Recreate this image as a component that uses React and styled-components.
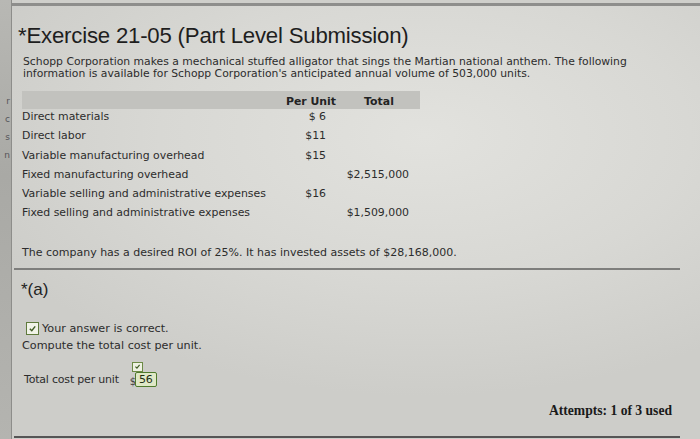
import React from 'react';
import styled, { createGlobalStyle } from 'styled-components';

const Global = createGlobalStyle`
  html, body {
    margin: 0;
    padding: 0;
    width: 700px;
    height: 439px;
    overflow: hidden;
    background: #cfcfcb;
  }
`;

const Screen = styled.div`
  display: flex;
  width: 700px;
  height: 439px;
  overflow: hidden;
  font-family: "DejaVu Sans", Verdana, sans-serif;
  color: #2c2c2c;
`;

const Edge = styled.div`
  width: 12px;
  flex-shrink: 0;
  background: linear-gradient(180deg, #b8b8b4 0%, #a9a9a5 40%, #b4b4b0 100%);
  border-right: 1px solid #8d8d8a;
  display: flex;
  flex-direction: column;
  align-items: flex-end;
  padding: 96px 1px 0 0;
  box-sizing: border-box;
  gap: 8px;
  font-size: 9px;
  color: #55555a;
`;

const EdgeGlyph = styled.span`
  line-height: 10px;
`;

const Main = styled.div`
  flex: 1;
  display: flex;
  flex-direction: column;
  border-top: 3px solid #8e8e8c;
  margin-top: 3px;
  padding: 17px 18px 0 6px;
  background: radial-gradient(ellipse 70% 60% at 60% 30%, #e2e2de 0%, #d8d8d4 55%, #cdcdc9 100%);
  & > * {
    flex-shrink: 0;
  }
`;

const Title = styled.h1`
  margin: 0;
  font-family: "Liberation Sans", Arial, sans-serif;
  font-weight: normal;
  font-size: 22.2px;
  line-height: 26px;
  letter-spacing: -0.2px;
  color: #1e1e1e;
`;

const Intro = styled.p`
  margin: 7px 0 0 5px;
  font-size: 10.8px;
  line-height: 12px;
  width: 640px;
`;

const Table = styled.div`
  margin: 11px 0 0 4px;
  width: 398px;
  display: grid;
  grid-template-columns: 262px 54px 82px;
  font-size: 10.9px;
`;

const HeadCell = styled.div`
  background: #c2c2be;
  height: 18px;
  line-height: 22px;
  font-weight: bold;
  text-align: center;
  color: #232323;
`;

const Cell = styled.div`
  height: 19.3px;
  line-height: 16px;
  text-align: ${p => p.align || 'left'};
  padding-right: ${p => p.pad || 0}px;
`;

const Note = styled.p`
  margin: 21px 0 0 4px;
  font-size: 11px;
`;

const Rule = styled.div`
  margin: 9px 2px 0 -4px;
  height: 2px;
  background: #7e7e7c;
`;

const PartLabel = styled.div`
  margin: 10px 0 0 3px;
  font-family: "Liberation Sans", Arial, sans-serif;
  font-size: 17px;
  color: #222;
`;

const Correct = styled.div`
  margin: 22px 0 0 8px;
  display: flex;
  align-items: center;
  gap: 3px;
  font-size: 11.2px;
`;

const CheckBox = styled.span`
  width: 11px;
  height: 11px;
  border: 1.5px solid #5f7a3c;
  background: #f1f3e8;
  display: inline-flex;
  align-items: center;
  justify-content: center;
`;

const Prompt = styled.div`
  margin: 4px 0 0 4px;
  font-size: 11.2px;
`;

const AnswerRow = styled.div`
  margin: 12px 0 0 6px;
  display: flex;
  align-items: flex-end;
  font-size: 11px;
  letter-spacing: -0.2px;
`;

const AnswerLabel = styled.span`
  margin-right: 11px;
  padding-bottom: 1px;
`;

const AnswerField = styled.span`
  position: relative;
  display: inline-flex;
  align-items: flex-end;
  padding-top: 8px;
`;

const MiniCheck = styled.span`
  position: absolute;
  top: -2px;
  left: 2px;
  width: 9px;
  height: 8px;
  border: 1px solid #6c8a45;
  background: #eef2e2;
  display: flex;
  align-items: center;
  justify-content: center;
`;

const Dollar = styled.span`
  font-size: 10px;
  color: #444;
  margin-right: -1px;
`;

const Value = styled.span`
  border: 1.5px solid #4f7a2c;
  background: #dfe8c6;
  border-radius: 2px;
  padding: 0 3px;
  font-size: 11px;
  line-height: 13px;
  color: #1f2f12;
`;

const Attempts = styled.div`
  margin: 16px 10px 0 0;
  align-self: flex-end;
  font-family: "Liberation Serif", "Times New Roman", serif;
  font-weight: bold;
  font-size: 13.6px;
  color: #1a1a1a;
`;

const Bottom = styled.div`
  margin: 17px 2px 0 -4px;
  height: 2px;
  background: #555;
`;

const Tick = ({ size = 9 }) => (
  <svg width={size} height={size} viewBox="0 0 10 10">
    <path d="M2 5.2 L4.2 7.4 L8 2.6" fill="none" stroke="#3e5a22" strokeWidth="1.6" />
  </svg>
);

const rows = [
  ['Direct materials', '$ 6', ''],
  ['Direct labor', '$11', ''],
  ['Variable manufacturing overhead', '$15', ''],
  ['Fixed manufacturing overhead', '', '$2,515,000'],
  ['Variable selling and administrative expenses', '$16', ''],
  ['Fixed selling and administrative expenses', '', '$1,509,000'],
];

const App = () => {
  return (
    <>
      <Global />
      <Screen>
        <Edge>
          <EdgeGlyph>r</EdgeGlyph>
          <EdgeGlyph>c</EdgeGlyph>
          <EdgeGlyph>s</EdgeGlyph>
          <EdgeGlyph>n</EdgeGlyph>
        </Edge>
        <Main>
          <Title>*Exercise 21-05 (Part Level Submission)</Title>
          <Intro>
            Schopp Corporation makes a mechanical stuffed alligator that sings the Martian national anthem. The following
            information is available for Schopp Corporation's anticipated annual volume of 503,000 units.
          </Intro>
          <Table>
            <HeadCell />
            <HeadCell>Per Unit</HeadCell>
            <HeadCell>Total</HeadCell>
            {rows.map(([name, unit, total]) => (
              <React.Fragment key={name}>
                <Cell>{name}</Cell>
                <Cell align="right" pad={12}>{unit}</Cell>
                <Cell align="right" pad={11}>{total}</Cell>
              </React.Fragment>
            ))}
          </Table>
          <Note>The company has a desired ROI of 25%. It has invested assets of $28,168,000.</Note>
          <Rule />
          <PartLabel>*(a)</PartLabel>
          <Correct>
            <CheckBox><Tick /></CheckBox>
            Your answer is correct.
          </Correct>
          <Prompt>Compute the total cost per unit.</Prompt>
          <AnswerRow>
            <AnswerLabel>Total cost per unit</AnswerLabel>
            <AnswerField>
              <MiniCheck><Tick size={7} /></MiniCheck>
              <Dollar>$</Dollar>
              <Value>56</Value>
            </AnswerField>
          </AnswerRow>
          <Attempts>Attempts: 1 of 3 used</Attempts>
          <Bottom />
        </Main>
      </Screen>
    </>
  );
};

export default App;
